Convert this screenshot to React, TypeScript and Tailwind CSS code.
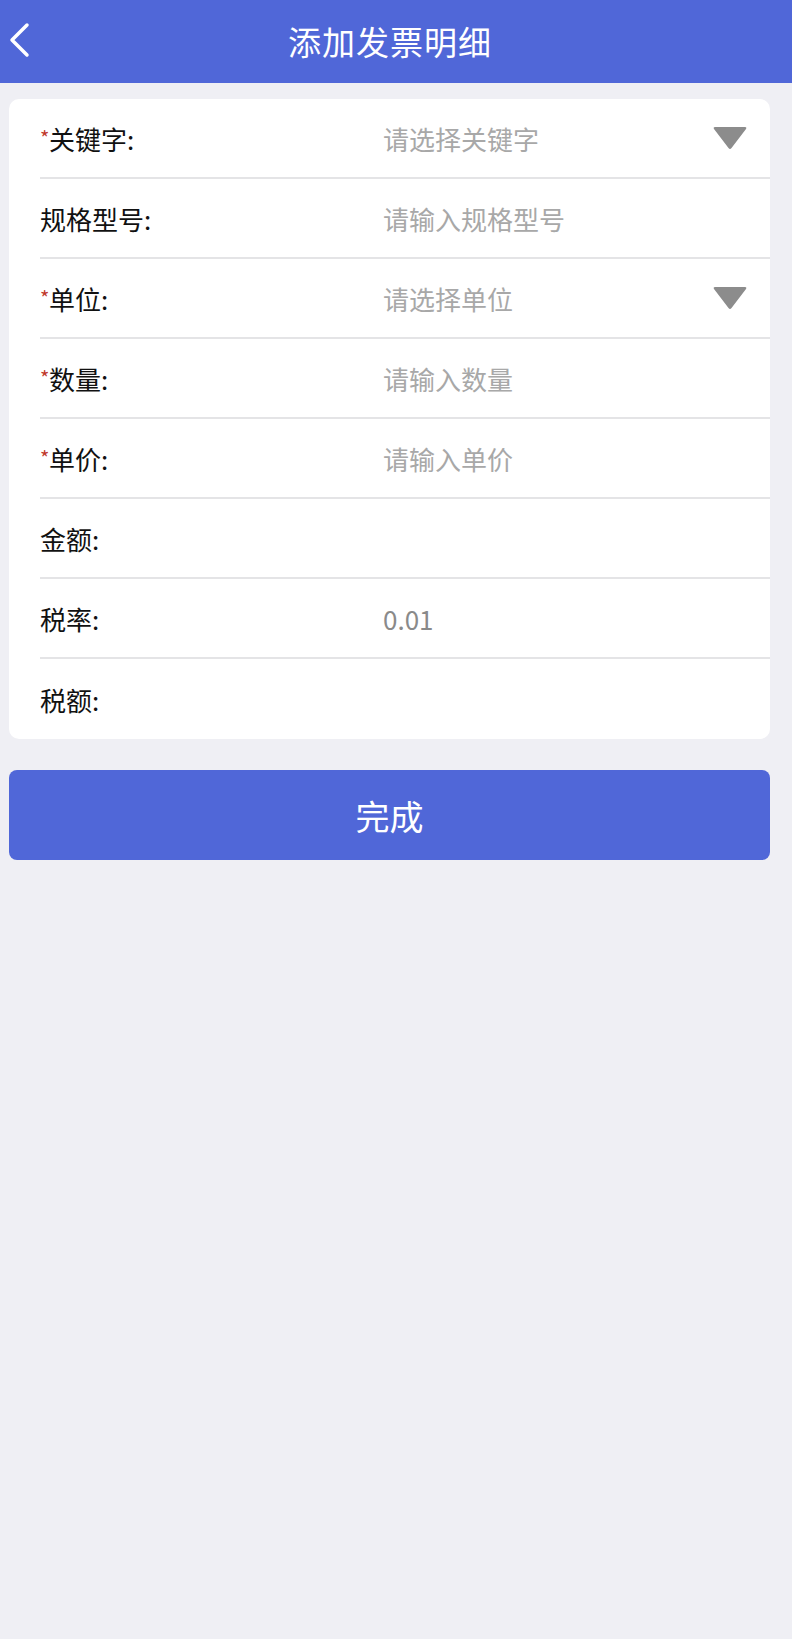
import React from 'react'

type Field = {
  label: string
  required?: boolean
  placeholder?: string
  value?: string
  select?: boolean
}

const fields: Field[] = [
  { label: '关键字:', required: true, placeholder: '请选择关键字', select: true },
  { label: '规格型号:', placeholder: '请输入规格型号' },
  { label: '单位:', required: true, placeholder: '请选择单位', select: true },
  { label: '数量:', required: true, placeholder: '请输入数量' },
  { label: '单价:', required: true, placeholder: '请输入单价' },
  { label: '金额:' },
  { label: '税率:', value: '0.01' },
  { label: '税额:' },
]

function Caret() {
  return (
    <svg width="36" height="26" viewBox="0 0 36 26" className="shrink-0">
      <path d="M3 2 H33 Q35 2 34 4 L19.5 23 Q18 25 16.5 23 L2 4 Q1 2 3 2 Z" fill="#8c8c8c" />
    </svg>
  )
}

function Row({ field, last }: { field: Field; last: boolean }) {
  return (
    <div className={`flex items-center h-[80px] pr-[22px] ${last ? '' : 'border-b-2 border-[#e4e4e6]'}`}>
      <div className="w-[343px] shrink-0 flex items-center text-[26px] text-[#111]">
        {field.required ? (
          <span className="text-[#c0392b] text-[20px] w-[9px] self-start mt-[9px] leading-none">*</span>
        ) : null}
        <span>{field.label}</span>
      </div>
      <div className="flex-1 min-w-0 text-[26px]">
        {field.value ? (
          <span className="text-[#8a8a8a]">{field.value}</span>
        ) : field.placeholder ? (
          <span className="text-[#a8a8a8]">{field.placeholder}</span>
        ) : null}
      </div>
      {field.select && <Caret />}
    </div>
  )
}

export default function App() {
  return (
    <div
      className="min-h-[1639px] bg-[#efeff4]"
      style={{ fontFamily: '"PingFang SC", "Noto Sans CJK SC", "Noto Sans", sans-serif' }}
    >
      <header className="h-[83px] bg-[#5067d8] grid grid-cols-[1fr_auto_1fr] items-center pr-[12px]">
        <div className="pl-[8px] flex items-center -mt-[4px]">
          <svg width="24" height="36" viewBox="0 0 24 36">
            <polyline points="19,3 4,18 19,33" fill="none" stroke="#fff" strokeWidth="3.5" strokeLinecap="round" strokeLinejoin="round" />
          </svg>
        </div>
        <h1 className="text-white text-[33px] leading-none tracking-[1px]">添加发票明细</h1>
        <div />
      </header>

      <main className="pl-[9px] pr-[22px] pt-[16px]">
        <div className="bg-white rounded-[10px] pl-[31px]">
          {fields.map((f, i) => (
            <Row key={f.label} field={f} last={i === fields.length - 1} />
          ))}
        </div>

        <button
          type="button"
          className="mt-[31px] w-full h-[90px] rounded-[8px] bg-[#5067d8] text-white text-[34px] flex items-center justify-center"
        >
          完成
        </button>
      </main>
    </div>
  )
}
